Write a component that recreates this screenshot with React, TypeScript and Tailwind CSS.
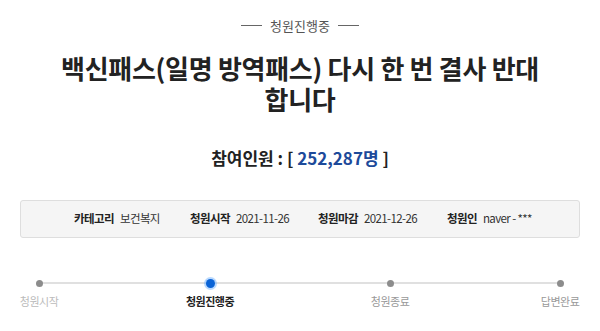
import React from "react";

const font = { fontFamily: '"Noto Sans CJK KR", "Noto Sans", sans-serif' };

const steps = [
  { label: "청원시작", cls: "text-[#bbbbbb]", dot: "gray" },
  { label: "청원진행중", cls: "text-[#222] font-bold", dot: "blue" },
  { label: "청원종료", cls: "text-[#999]", dot: "gray" },
  { label: "답변완료", cls: "text-[#999]", dot: "gray" },
];
const spacers = ["w-[171px]", "w-[180px]", "w-[170px]"];

function Row({ render }: { render: (s: (typeof steps)[number]) => React.ReactNode }) {
  return (
    <div className="flex items-center ml-[39px]">
      {steps.map((s, i) => (
        <React.Fragment key={i}>
          <div className="w-0 flex justify-center">{render(s)}</div>
          {i < spacers.length && <div className={`${spacers[i]} shrink-0`} />}
        </React.Fragment>
      ))}
    </div>
  );
}

export default function App() {
  return (
    <div className="w-[600px] h-[331px] bg-white overflow-hidden" style={font}>
      <div className="flex items-center justify-center gap-[8px] pt-[14px] h-[36px]">
        <div className="w-[21px] h-px bg-[#666]" />
        <span className="text-[13px] text-[#555] leading-none">청원진행중</span>
        <div className="w-[21px] h-px bg-[#666]" />
      </div>
      <h1 className="mt-[16px] text-center text-[26px] font-bold text-[#222] leading-[31px] tracking-[-0.3px]">
        백신패스(일명 방역패스) 다시 한 번 결사 반대
        <br />
        합니다
      </h1>
      <div className="mt-[32px] text-center text-[17px] font-bold text-[#222] leading-[24px]">
        참여인원 : [ <span className="text-[#1d4a9a]">252,287명</span> ]
      </div>
      <div className="mx-[20px] mt-[30px] h-[38px] bg-[#f5f5f5] border border-[#dedede] rounded-[3px] flex items-center text-[11.5px] text-[#333] leading-none tracking-[-0.6px]">
        <div className="pl-[53px] w-[169px] flex gap-[6px]">
          <span className="font-bold text-[#222]">카테고리</span>
          <span>보건복지</span>
        </div>
        <div className="w-[128px] flex gap-[6px]">
          <span className="font-bold text-[#222]">청원시작</span>
          <span>2021-11-26</span>
        </div>
        <div className="w-[129px] flex gap-[6px]">
          <span className="font-bold text-[#222]">청원마감</span>
          <span>2021-12-26</span>
        </div>
        <div className="flex gap-[6px]">
          <span className="font-bold text-[#222]">청원인</span>
          <span>naver - ***</span>
        </div>
      </div>
      <div className="relative mt-[40px] h-[10px]">
        <div className="absolute left-[39px] w-[521px] top-[4px] h-[2px] bg-[#e0e0e0]" />
        <div className="relative h-full flex items-center">
          <Row
            render={(s) =>
              s.dot === "blue" ? (
                <div className="w-[9px] h-[9px] rounded-full bg-[#0a63d6] shrink-0 shadow-[0_0_0_2px_rgba(100,170,255,0.45)]" />
              ) : (
                <div className="w-[7px] h-[7px] rounded-full bg-[#8c8c8c] shrink-0" />
              )
            }
          />
        </div>
      </div>
      <div className="mt-[8px]">
        <Row
          render={(s) => (
            <span className={`text-[11px] whitespace-nowrap leading-none tracking-[-0.5px] ${s.cls}`}>{s.label}</span>
          )}
        />
      </div>
    </div>
  );
}
